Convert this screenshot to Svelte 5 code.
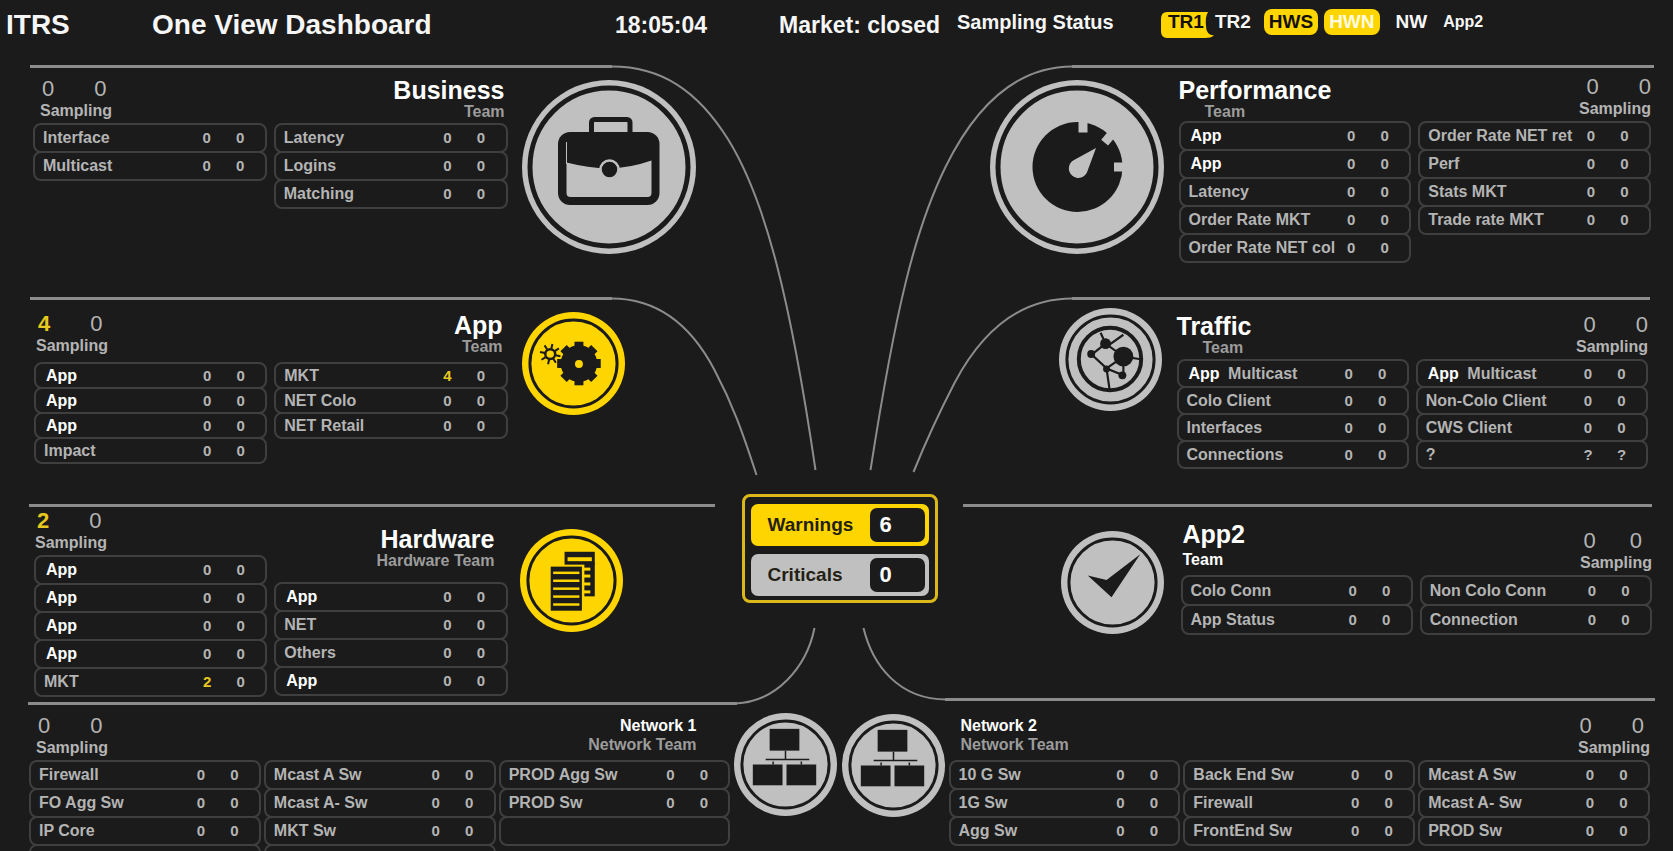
<script>
  const row = (label, warn = '0', crit = '0', suffix = '') => ({ label, warn, crit, suffix });

  const left = [
    {
      id: 'business', title: 'Business', team: 'Team', icon: 'case', sampling: ['0', '0'],
      cols: [
        [row('Interface'), row('Multicast')],
        [row('Latency'), row('Logins'), row('Matching')]
      ]
    },
    {
      id: 'apps', title: 'App', team: 'Team', icon: 'gears', sampling: ['4', '0'],
      cols: [
        [row('App'), row('App'), row('App'), row('Impact')],
        [row('MKT', '4'), row('NET Colo'), row('NET Retail')]
      ]
    },
    {
      id: 'hardware', title: 'Hardware', team: 'Hardware Team', icon: 'servers', sampling: ['2', '0'],
      cols: [
        [row('App'), row('App'), row('App'), row('App'), row('MKT', '2')],
        [row('App'), row('NET'), row('Others'), row('App')]
      ]
    },
    {
      id: 'network1', title: 'Network 1', team: 'Network Team', icon: 'network', sampling: ['0', '0'],
      cols: [
        [row('Firewall'), row('FO Agg Sw'), row('IP Core'), row('', '', '')],
        [row('Mcast A Sw'), row('Mcast A- Sw'), row('MKT Sw'), row('', '', '')],
        [row('PROD Agg Sw'), row('PROD Sw'), row('', '', '')]
      ]
    }
  ];

  const right = [
    {
      id: 'performance', title: 'Performance', team: 'Team', icon: 'gauge', sampling: ['0', '0'],
      cols: [
        [row('App'), row('App'), row('Latency'), row('Order Rate MKT'), row('Order Rate NET col')],
        [row('Order Rate NET ret'), row('Perf'), row('Stats MKT'), row('Trade rate MKT')]
      ]
    },
    {
      id: 'traffic', title: 'Traffic', team: 'Team', icon: 'graph', sampling: ['0', '0'],
      cols: [
        [row('App', '0', '0', 'Multicast'), row('Colo Client'), row('Interfaces'), row('Connections')],
        [row('App', '0', '0', 'Multicast'), row('Non-Colo Client'), row('CWS Client'), row('?', '?', '?')]
      ]
    },
    {
      id: 'app2', title: 'App2', team: 'Team', icon: 'check', sampling: ['0', '0'],
      cols: [
        [row('Colo Conn'), row('App Status')],
        [row('Non Colo Conn'), row('Connection')]
      ]
    },
    {
      id: 'network2', title: 'Network 2', team: 'Network Team', icon: 'network', sampling: ['0', '0'],
      cols: [
        [row('10 G Sw'), row('1G Sw'), row('Agg Sw')],
        [row('Back End Sw'), row('Firewall'), row('FrontEnd Sw')],
        [row('Mcast A Sw'), row('Mcast A- Sw'), row('PROD Sw')]
      ]
    }
  ];

  const isAlert = (v) => Number(v) > 0;
</script>

{#snippet smallRing()}
  <circle cx="52" cy="52" r="52" fill="currentColor" />
  <circle cx="52" cy="52" r="44" fill="none" stroke="#1b1b1b" stroke-width="3" />
{/snippet}

{#snippet bigRing()}
  <circle cx="87" cy="87" r="87" fill="currentColor" />
  <circle cx="87" cy="87" r="79" fill="none" stroke="#1b1b1b" stroke-width="5" />
{/snippet}

{#snippet icon(name)}
  {#if name === 'case'}
    <svg class="icon" width="174" height="174" viewBox="0 0 174 174" aria-hidden="true">
      {@render bigRing()}
      <rect x="69.500" y="39.500" width="38.500" height="24" rx="3" fill="none" stroke="#1b1b1b" stroke-width="5" />
      <rect x="36" y="52" width="101.500" height="73" rx="12" fill="#1b1b1b" />
      <path d="M44.500 82.500Q66 88 87 88.500Q108 88 129.500 80.500V113Q129.500 117 125.500 117H48.500Q44.500 117 44.500 113Z" fill="currentColor" />
      <path d="M44.500 62V84" stroke="currentColor" stroke-width="1" />
      <circle cx="87.500" cy="89.500" r="9" fill="#1b1b1b" stroke="currentColor" stroke-width="2.500" />
    </svg>
  {:else if name === 'gauge'}
    <svg class="icon" width="174" height="174" viewBox="0 0 174 174" aria-hidden="true">
      {@render bigRing()}
      <circle cx="87.500" cy="87" r="45" fill="#1b1b1b" />
      <g fill="currentColor">
        <rect x="88.500" y="40" width="9" height="12.500" />
        <rect x="124" y="82.500" width="12" height="9" />
        <rect x="114" y="52" width="9" height="12" transform="rotate(40 118.500 58)" />
        <path d="M106 68L97.500 91A9.500 9.500 0 1 1 84 80Z" />
      </g>
    </svg>
  {:else}
    <svg class="icon" width="103" height="103" viewBox="0 0 104 104" aria-hidden="true">
      {@render smallRing()}
      {#if name === 'gears'}
        <g fill="#1b1b1b">
          <circle cx="57.500" cy="52" r="18.500" />
          {#each [0, 45, 90, 135] as a}
            <rect x="53" y="30" width="9" height="44" transform="rotate({a} 57.500 52)" />
          {/each}
        </g>
        <circle cx="57.500" cy="52.500" r="4" fill="currentColor" />
        <g stroke="#1b1b1b" stroke-width="2">
          {#each [0, 45, 90, 135, 180, 225, 270, 315] as a}
            <path d="M28.500 37V32" transform="rotate({a + 12} 28.500 42.500)" />
          {/each}
          <circle cx="28.500" cy="42.500" r="5" fill="currentColor" stroke-width="2.500" />
        </g>
      {:else if name === 'servers'}
        <g fill="#1b1b1b">
          <rect x="45" y="23" width="30.500" height="13" />
          <rect x="65" y="34" width="10.500" height="34" />
          <rect x="31" y="38" width="31.500" height="44.500" />
        </g>
        <g fill="currentColor">
          <rect x="48" y="28.500" width="24.500" height="4" />
          {#each [39, 46, 54, 62] as y}
            <rect x="64" {y} width="7" height="3" />
          {/each}
          {#each [43, 51, 59, 67, 75] as y}
            <rect x="33.500" {y} width="26.500" height="2.500" />
          {/each}
        </g>
      {:else if name === 'graph'}
        <circle cx="51.500" cy="51.500" r="31.500" fill="none" stroke="#1b1b1b" stroke-width="4" />
        <g fill="none" stroke="#1b1b1b" stroke-width="2.200">
          <path d="M42 25L47 36L65 49L84 52M65 27L51 37M47 36L33 47L48 61L65 49V68L48 61L51 82" />
        </g>
        <g fill="#1b1b1b">
          <circle cx="65" cy="49" r="10" />
          <circle cx="47" cy="36" r="5.500" />
          <circle cx="32.500" cy="46.500" r="4" />
          <circle cx="48" cy="61.500" r="3.500" />
          <circle cx="64" cy="68" r="4" />
        </g>
      {:else if name === 'check'}
        <path d="M27 45L46 49.500L80 23.500L51 67Z" fill="#1b1b1b" />
      {:else}
        <g fill="#1b1b1b">
          <rect x="36" y="16" width="30" height="22" />
          <rect x="19" y="52" width="30" height="21" />
          <rect x="53" y="52" width="30" height="21" />
        </g>
        <path d="M52 38V47M32 47H76M39.500 49V52M68 49V52" stroke="#1b1b1b" stroke-width="1.500" />
      {/if}
    </svg>
  {/if}
{/snippet}

{#snippet sampling(values)}
  <div class="sampling">
    <div class="numbers">
      {#each values as v}<span class:alert={isAlert(v)}>{v}</span>{/each}
    </div>
    <div class="caption">Sampling</div>
  </div>
{/snippet}

{#snippet heading(s)}
  <div class="heading">
    <h2>{s.title}</h2>
    <p>{s.team}</p>
  </div>
{/snippet}

{#snippet panel(s, side)}
  {@const last = s.cols.length - 1}
  <section class="panel {side} {s.id}">
    <div class="rule"></div>
    <div class="inner">
      <div class="cols">
        {#each s.cols as rows, i}
          <div class="col">
            <div class="head">
              {#if i === (side === 'left' ? 0 : last)}
                {@render sampling(s.sampling)}
              {:else if i === (side === 'left' ? last : 0)}
                {@render heading(s)}
              {/if}
            </div>
            <table>
              <tbody>
                {#each rows as r}
                  <tr>
                    <th scope="row">
                      {#if r.label === 'App'}<span class="own">App</span>{:else}{r.label}{/if}
                      {r.suffix}
                    </th>
                    <td class:alert={isAlert(r.warn)}>{r.warn}</td>
                    <td>{r.crit}</td>
                  </tr>
                {/each}
              </tbody>
            </table>
          </div>
        {/each}
      </div>
      <div class="badge" class:alert={isAlert(s.sampling[0])}>{@render icon(s.icon)}</div>
    </div>
  </section>
{/snippet}

<div class="page">
  <header>
    <div class="brand">ITRS</div>
    <h1>One View Dashboard</h1>
    <div class="info">18:05:04</div>
    <div class="info">Market: closed</div>
    <div class="status">Sampling Status</div>
    <div class="tags">
      <span class="tag clipped">
        <svg width="54" height="26" viewBox="0 0 54 26" aria-hidden="true">
          <path d="M6 0H47Q44 5 45 14Q45 23 53 23.500Q50 26 44 26H6Q0 26 0 19V7Q0 0 6 0Z" fill="#ffd500" />
        </svg>
        <b>TR1</b>
      </span>
      <span class="tag near">TR2</span>
      <span class="tag on">HWS</span>
      <span class="tag on light spaced">HWN</span>
      <span class="tag spaced">NW</span>
      <span class="tag small">App2</span>
    </div>
  </header>

  <main>
    <div class="half">
      {#each left as s}{@render panel(s, 'left')}{/each}
    </div>
    <div class="half">
      {#each right as s}{@render panel(s, 'right')}{/each}
    </div>

    <svg class="links" width="464" height="645" viewBox="609.500 65 464 645" aria-hidden="true">
      <g fill="none" stroke="#8c8c8c" stroke-width="2">
        <path d="M610 66.500C660 66 697 90 728 140C765 200 790 300 815 470" />
        <path d="M1073 66.500C1020 66 978 100 945 167C914 230 895 310 870 470" />
        <path d="M610 298.500C660 298 692 328 714 370C732 404 742 432 756 475" />
        <path d="M1073 298.500C1020 298 982 330 954 383C940 410 928 435 913 472" />
        <path d="M735 703.500C775 702 806 668 814 628" />
        <path d="M863 628C872 665 898 699.500 946 699.500" />
      </g>
    </svg>

    <div class="totals">
      <div class="total warn"><span>Warnings</span><strong>6</strong></div>
      <div class="total"><span>Criticals</span><strong>0</strong></div>
    </div>
  </main>
</div>

<style>
  :global(body) {
    margin: 0;
    background: #1b1b1b;
  }

  .page {
    height: 100vh;
    overflow: hidden;
    display: flex;
    flex-direction: column;
    background: #1b1b1b;
    color: #b4b4b4;
    font: bold 16px/20px 'Liberation Sans', Arial, sans-serif;
  }

  h1, h2, p {
    margin: 0;
    font-weight: bold;
  }

  header {
    box-sizing: border-box;
    flex: none;
    min-height: 65px;
    padding: 9px 0 0 6px;
    display: grid;
    grid-template-columns:
      minmax(0, 146fr) minmax(0, 463fr) minmax(0, 164fr) minmax(0, 178fr)
      minmax(0, 204fr) minmax(0, 512fr);
    align-items: start;
    color: #f6f6f6;
    white-space: nowrap;
  }

  .brand, h1 {
    font-size: 28px;
    line-height: 32px;
  }

  .info {
    font-size: 23px;
    line-height: 32px;
  }

  .status {
    font-size: 20px;
    line-height: 26px;
  }

  .tags {
    display: flex;
    gap: 6px;
    font-size: 19px;
    line-height: 26px;
  }

  .tag.on {
    padding: 0 5px;
    border-radius: 8px;
    background: #ffd500;
    color: #141008;
  }

  .tag.on.light {
    color: #fffbe0;
  }

  .tag.spaced {
    margin-right: 10px;
  }

  .tag.near {
    margin-right: 7px;
  }

  .tag.small {
    font-size: 16px;
  }

  .tag.clipped {
    position: relative;
    padding: 0 5px 0 7px;
    color: #141008;
  }

  .tag.clipped svg {
    position: absolute;
    left: 0;
    top: 3px;
  }

  .tag.clipped b {
    position: relative;
  }

  main {
    flex: 1;
    position: relative;
    display: grid;
    grid-template-columns: minmax(0, 1fr) minmax(0, 1fr);
  }

  .rule {
    height: 3px;
    background: #8c8c8c;
    margin: 0 var(--rule-end) 0 var(--rule-start);
  }

  .inner {
    display: flex;
    align-items: flex-start;
    padding-left: var(--edge);
  }

  .right .inner {
    flex-direction: row-reverse;
    padding: 0 var(--edge) 0 0;
  }

  .cols {
    flex: 1;
    min-width: 0;
    display: flex;
    gap: var(--gutter, 7px);
  }

  .col {
    flex: 1;
    min-width: 0;
  }

  .badge {
    box-sizing: border-box;
    flex: 0 0 var(--aside);
    padding: var(--badge-top) 15px 0 14px;
    display: flex;
    color: #c0c0c0;
  }

  .right .badge {
    justify-content: flex-end;
  }

  .badge.alert {
    color: #ffd500;
  }

  .icon {
    flex: none;
    display: block;
  }

  .head {
    box-sizing: border-box;
    min-height: var(--head);
    padding-bottom: 3px;
    display: flex;
    flex-direction: column;
    justify-content: flex-end;
  }

  .sampling {
    padding-left: var(--inset, 0);
  }

  .numbers {
    display: flex;
    gap: var(--number-gap, 40px);
    padding-left: 2px;
    font-size: 22px;
    line-height: 24px;
    font-weight: normal;
  }

  .numbers .alert {
    font-weight: bold;
  }

  .right .sampling {
    text-align: right;
  }

  .right .numbers {
    justify-content: flex-end;
    padding-right: var(--inset, 0);
  }

  .heading {
    color: #9c9c9c;
    line-height: 19px;
  }

  .left .heading {
    text-align: right;
    padding-right: var(--title-inset, 3px);
  }

  .right .heading {
    padding-left: var(--title-inset, 0);
  }

  .right .heading p {
    padding-left: var(--team-inset, 0);
  }

  h2 {
    color: #fff;
    font-size: 25px;
    line-height: 24px;
  }

  table {
    display: block;
  }

  tbody {
    display: block;
    padding-top: 1px;
  }

  tr {
    box-sizing: border-box;
    height: calc(var(--pitch, 28px) + 2px);
    margin-top: -2px;
    padding: 0 8px;
    display: grid;
    grid-template-columns: minmax(0, 1fr) 34px 33px;
    align-items: center;
    border: 2px solid #3f3f3f;
    border-radius: 8px;
  }

  th, td {
    padding: 0;
    white-space: nowrap;
    line-height: 20px;
  }

  th {
    text-align: left;
  }

  td {
    font-size: 15px;
    text-align: center;
  }

  .own {
    padding: 0 4px 0 2px;
    color: #fff;
  }

  td.alert, .numbers .alert {
    color: #e6c81e;
  }

  .business {
    --rule-start: 30px; --rule-end: 225px; --edge: 33px; --aside: 329px;
    --badge-top: 12px; --head: 56px; --inset: 7px;
    min-height: 232px;
  }

  .apps {
    --rule-start: 30px; --rule-end: 225px; --edge: 34px; --aside: 329px;
    --badge-top: 12px; --head: 63px; --inset: 2px; --pitch: 25px; --title-inset: 5px;
    min-height: 207px;
  }

  .apps .head {
    padding-bottom: 7px;
  }

  .hardware {
    --rule-start: 29px; --rule-end: 122px; --edge: 34px; --aside: 329px;
    --badge-top: 22px; --head: 49px; --inset: 1px; --title-inset: 13px;
    min-height: 198px;
  }

  .hardware .badge {
    padding-left: 12px;
  }

  .hardware .col:last-child .head {
    min-height: 76px;
    padding-bottom: 13px;
  }

  .network1 {
    --rule-start: 28px; --rule-end: 100px; --edge: 29px; --aside: 106px; --gutter: 3px;
    --badge-top: 8px; --head: 56px; --inset: 7px; --title-inset: 34px;
  }

  .network1 .badge {
    padding-left: 3px;
    padding-right: 0;
  }

  .network2 .badge {
    padding-left: 0;
    padding-right: 4px;
  }

  .network1 .heading, .network2 .heading {
    padding-bottom: 4px;
  }

  .network1 h2, .network2 h2 {
    font-size: 16px;
    line-height: 19px;
  }

  .performance {
    --rule-start: 235px; --rule-end: 19px; --edge: 22px; --aside: 342px;
    --badge-top: 12px; --head: 54px; --team-inset: 26px;
    min-height: 232px;
  }

  .performance .col:first-child .head {
    padding-bottom: 1px;
  }

  .traffic {
    --rule-start: 235px; --rule-end: 23px; --edge: 25px; --aside: 340px;
    --badge-top: 8px; --head: 60px; --team-inset: 26px; --pitch: 27px;
    min-height: 207px;
  }

  .app2 {
    --rule-start: 126px; --rule-end: 21px; --edge: 21px; --aside: 344px;
    --badge-top: 24px; --head: 69px; --inset: 10px; --pitch: 29px; --title-inset: 2px;
    --number-gap: 34px;
    min-height: 194px;
  }

  .app2 .badge {
    padding-right: 17px;
  }

  .app2 h2 {
    padding-bottom: 4px;
  }

  .app2 p {
    color: #fff;
  }

  .app2 .col:first-child .head {
    padding-bottom: 7px;
  }

  .network2 {
    --rule-start: 108px; --rule-end: 18px; --edge: 23px; --aside: 112px; --gutter: 3px;
    --badge-top: 13px; --head: 60px; --inset: 6px; --title-inset: 12px;
  }

  .links {
    position: absolute;
    top: 0;
    left: calc(50% - 227px);
  }

  .totals {
    position: absolute;
    top: 429px;
    left: calc(50% - 95px);
    padding: 7px 6px 4px;
    border: 3px solid #dcb91a;
    border-radius: 8px;
    display: grid;
    gap: 8px;
  }

  .total {
    box-sizing: border-box;
    width: 178px;
    padding: 4px 4px 4px 17px;
    border-radius: 7px;
    display: flex;
    justify-content: space-between;
    background: #c0c0c0;
    color: #241f14;
    font-size: 19px;
    line-height: 34px;
  }

  .total.warn {
    background: #ffd500;
  }

  .total strong {
    box-sizing: border-box;
    width: 55px;
    padding-left: 10px;
    border-radius: 7px;
    background: #1b1b1b;
    color: #fff;
    font-size: 22px;
  }
</style>
